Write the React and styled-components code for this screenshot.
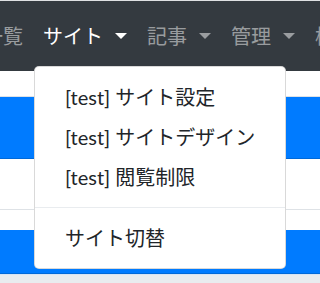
import React from 'react';
import styled, { createGlobalStyle } from 'styled-components';

const GlobalStyle = createGlobalStyle`
  html, body {
    margin: 0;
    padding: 0;
    background: #fff;
    overflow: hidden;
  }
  body {
    font-family: Lato, "Noto Sans CJK JP", sans-serif;
    font-size: 20px;
    line-height: 1.5;
    color: #212529;
  }
`;

const Page = styled.div`
  width: 320px;
  height: 283px;
  display: flex;
  flex-direction: column;
  border-top: 1px solid #dfe1e3;
  overflow: hidden;
`;

const Navbar = styled.nav`
  background: #343a40;
  padding: 10px 0;
  flex: none;
`;

const NavList = styled.ul`
  list-style: none;
  margin: 0 0 0 -27px;
  padding: 0;
  display: flex;
  white-space: nowrap;
`;

const NavItem = styled.li`
  position: relative;
  flex: none;
`;

const NavLink = styled.a`
  display: flex;
  align-items: center;
  padding: 10px;
  line-height: 30px;
  color: ${p => (p.$active ? '#fff' : 'rgba(255, 255, 255, 0.5)')};
  text-decoration: none;
  cursor: pointer;
`;

const Caret = styled.span`
  display: inline-block;
  margin-left: 12px;
  width: 0;
  height: 0;
  border-top: 6px solid currentColor;
  border-left: 6px solid transparent;
  border-right: 6px solid transparent;
`;

const Menu = styled.div`
  position: absolute;
  top: calc(100% + 5px);
  left: 1px;
  z-index: 10;
  background: #fff;
  border: 1px solid rgba(0, 0, 0, 0.15);
  border-radius: 5px;
  padding: 10px 0;
  white-space: nowrap;
`;

const MenuItem = styled.a`
  display: block;
  padding: 5px 30px;
  line-height: 30px;
  color: #212529;
  text-decoration: none;
`;

const Divider = styled.div`
  height: 0;
  margin: 10px 0;
  border-top: 1px solid #e9ecef;
`;

const Content = styled.div`
  flex: 1;
  display: flex;
  flex-direction: column;
`;

const Row = styled.div`
  flex: none;
  height: ${p => p.$h}px;
  background: ${p => (p.$active ? '#007bff' : '#fff')};
  border-bottom: 1px solid ${p => (p.$active ? '#0069d9' : '#dee2e6')};
`;

const Spacer = styled.div`
  flex: none;
  height: ${p => p.$h}px;
`;

const Footer = styled.div`
  flex: 1;
  background: #e9ecef;
  border-top: 1px solid #d6e4f5;
`;

const menu = ['[test] サイト設定', '[test] サイトデザイン', '[test] 閲覧制限'];

export default function App() {
  return (
    <>
      <GlobalStyle />
      <Page>
        <Navbar>
          <NavList>
            <NavItem>
              <NavLink>一覧</NavLink>
            </NavItem>
            <NavItem>
              <NavLink $active>
                サイト<Caret />
              </NavLink>
              <Menu>
                {menu.map(m => (
                  <MenuItem key={m}>{m}</MenuItem>
                ))}
                <Divider />
                <MenuItem>サイト切替</MenuItem>
              </Menu>
            </NavItem>
            <NavItem>
              <NavLink>
                記事<Caret />
              </NavLink>
            </NavItem>
            <NavItem>
              <NavLink>
                管理<Caret />
              </NavLink>
            </NavItem>
            <NavItem>
              <NavLink>権限</NavLink>
            </NavItem>
          </NavList>
        </Navbar>
        <Content>
          <Row $h={25} />
          <Row $h={61} $active />
          <Row $h={50} />
          <Spacer $h={20} />
          <Row $h={43} $active />
          <Footer />
        </Content>
      </Page>
    </>
  );
}
